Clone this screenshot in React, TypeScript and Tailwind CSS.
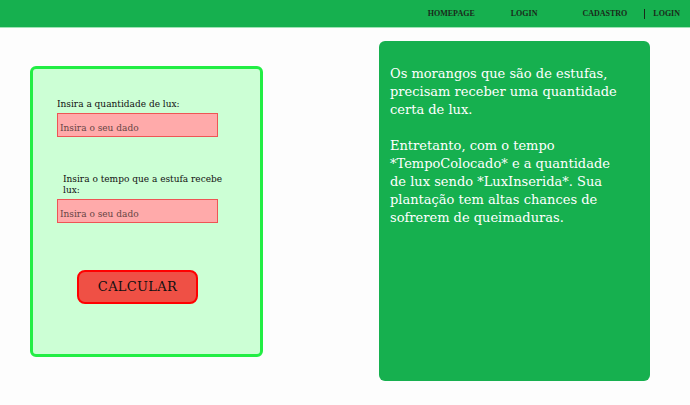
export default function App() {
  const serif = { fontFamily: '"DejaVu Serif", "Liberation Serif", serif' };
  return (
    <div className="w-[690px] h-[405px] bg-[#fdfdfd] overflow-hidden" style={serif}>
      <header
        className="h-[28px] bg-[#16b04f] border-b border-[#9fe3b5] flex items-center justify-end pr-[10px] text-[8px] font-bold text-[#1a2a1a]"
        style={{ fontFamily: '"Liberation Serif", serif' }}
      >
        <span className="mr-[36px]">HOMEPAGE</span>
        <span className="mr-[45px]">LOGIN</span>
        <span className="mr-[17px]">CADASTRO</span>
        <span className="w-px h-[10px] bg-[#1a2a1a] mr-[8px]" />
        <span>LOGIN</span>
      </header>

      <div className="flex">
        <div className="ml-[30px] mt-[38px] w-[233px] h-[291px] bg-[#ccffd5] border-[3px] border-[#22ee44] rounded-[6px] flex flex-col">
          <div className="ml-[24px] mt-[29px] w-[161px]">
            <label className="block text-[9px] text-[#111] leading-[12px]">Insira a quantidade de lux:</label>
            <div className="mt-[3px] h-[24px] bg-[#ffaaaa] border border-[#ee5555] flex items-end px-[2px] pb-[1px]">
              <span className="text-[9px] text-[#664444]">Insira o seu dado</span>
            </div>
          </div>
          <div className="ml-[30px] mt-[37px] w-[165px]">
            <label className="block text-[9px] text-[#111] leading-[11px]">Insira o tempo que a estufa recebe lux:</label>
          </div>
          <div className="ml-[24px] mt-[3px] w-[161px] h-[24px] bg-[#ffaaaa] border border-[#ee5555] flex items-end px-[2px] pb-[1px]">
            <span className="text-[9px] text-[#664444]">Insira o seu dado</span>
          </div>
          <button className="ml-[44px] mt-[47px] w-[121px] h-[34px] bg-[#ef5045] border-2 border-[#ff0000] rounded-[8px] text-[13px] text-[#111] tracking-wide">
            CALCULAR
          </button>
        </div>

        <div className="ml-[116px] mt-[13px] w-[271px] h-[340px] bg-[#16b04f] rounded-[6px] pl-[11px] pr-[26px] pt-[24px] text-[13px] leading-[18px] text-white">
          <p>Os morangos que são de estufas, precisam receber uma quantidade certa de lux.</p>
          <p className="mt-[18px]">Entretanto, com o tempo *TempoColocado* e a quantidade de lux sendo *LuxInserida*. Sua plantação tem altas chances de sofrerem de queimaduras.</p>
        </div>
      </div>
    </div>
  );
}
